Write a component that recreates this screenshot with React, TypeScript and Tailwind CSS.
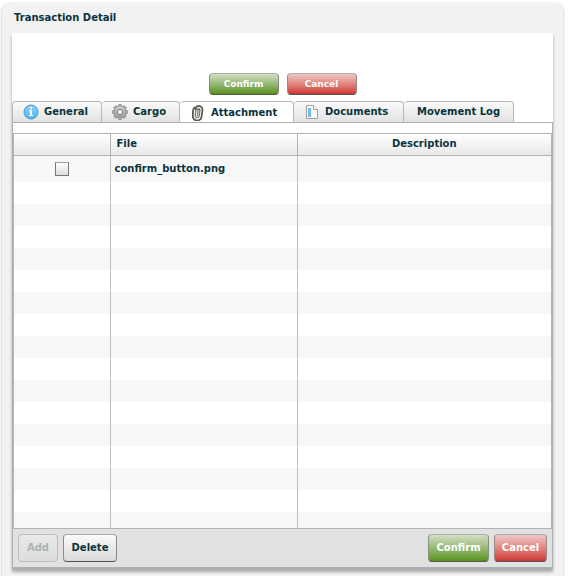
import React, { useState } from 'react';
import clsx from 'clsx';

interface Attachment {
  id: string;
  file: string;
  description: string;
}

interface Tab {
  id: string;
  label: string;
  width: string;
  icon?: React.ReactNode;
}

const attachments: Attachment[] = [
  { id: 'a1', file: 'confirm_button.png', description: '' },
];

// blank rows that fill up the grid below the data
const EMPTY_ROWS = 15;

const InfoIcon = () => (
  <svg className="h-4 w-4" viewBox="0 0 16 16" aria-hidden="true">
    <defs>
      <linearGradient id="info" x1="0" y1="0" x2="0" y2="1">
        <stop offset="0" stopColor="#8fd0f7" />
        <stop offset="1" stopColor="#4bb8f5" />
      </linearGradient>
    </defs>
    <circle cx="8" cy="8" r="7" fill="url(#info)" stroke="#4795c4" strokeWidth="1" />
    <rect x="7" y="3" width="2" height="2" fill="#fff" />
    <path d="M6 6h3v5h1v1H6v-1h1V7H6z" fill="#fff" />
  </svg>
);

const GearIcon = () => (
  <svg className="h-4 w-4" viewBox="0 0 16 16" aria-hidden="true">
    <defs>
      <linearGradient id="gear" x1="0" y1="0" x2="0" y2="1">
        <stop offset="0" stopColor="#d2d2d2" />
        <stop offset="1" stopColor="#999" />
      </linearGradient>
    </defs>
    {[0, 45, 90, 135].map((angle) => (
      <rect
        key={angle}
        x="6.3"
        y="0.5"
        width="3.4"
        height="15"
        rx="1.2"
        fill="#bbb"
        stroke="#7d7d7d"
        strokeWidth="0.9"
        transform={`rotate(${angle} 8 8)`}
      />
    ))}
    <circle cx="8" cy="8" r="5.8" fill="url(#gear)" stroke="#8a8a8a" strokeWidth="0.5" />
    <circle cx="8" cy="8" r="2.7" fill="#ededed" stroke="#757575" strokeWidth="0.9" />
  </svg>
);

const ClipIcon = () => (
  <svg className="h-4 w-4" viewBox="0 0 16 16" fill="none" strokeLinecap="round" aria-hidden="true">
    <path
      d="M5.8 4.4 5.3 10.5a2 2 0 0 0 4 .3l.6-6"
      stroke="#77776f"
      strokeWidth="1.3"
    />
    <path d="M7.6 10.5 8 5" stroke="#66665f" strokeWidth="1.1" />
    <path
      d="M5 2.4C3.6 3 3.1 4.2 3 6l-.2 5a4.4 4.4 0 0 0 8.8.4l.9-6.6A3.600 3.600 0 0 0 9 1C7 .8 5.9 2 5.8 4.400"
      stroke="#5c5c56"
      strokeWidth="1.8"
    />
    <path d="M9.9 4.8A1.2 1.2 0 0 0 7.6 4.600" stroke="#55554f" strokeWidth="1.2" />
  </svg>
);

const DocIcon = () => (
  <svg className="h-4 w-4" viewBox="0 0 16 16" aria-hidden="true">
    <path d="M2.5 1.5h7l4 4v9h-11z" fill="#fafafa" stroke="#a0a0a0" />
    <path d="M9.5 1.5v4h4" fill="#fff" stroke="#a0a0a0" />
    <rect x="4" y="4" width="3" height="9" fill="#74bdea" />
  </svg>
);

const tabs: Tab[] = [
  { id: 'general', label: 'General', width: 'w-[90px]', icon: <InfoIcon /> },
  { id: 'cargo', label: 'Cargo', width: 'w-[78px]', icon: <GearIcon /> },
  { id: 'attachment', label: 'Attachment', width: 'w-[114px]', icon: <ClipIcon /> },
  { id: 'documents', label: 'Documents', width: 'w-[110px]', icon: <DocIcon /> },
  { id: 'log', label: 'Movement Log', width: 'w-[110px]' },
];

interface ButtonProps extends React.ButtonHTMLAttributes<HTMLButtonElement> {
  tone?: 'plain' | 'green' | 'red';
}

function Button({ tone = 'plain', className, ...props }: ButtonProps) {
  return (
    <button
      type="button"
      className={clsx(
        'rounded border border-b-[#555] font-bold',
        tone === 'plain' &&
          'border-x-[#8a8a8a] border-t-[#a5a9ab] bg-linear-to-b from-[#fafafa] to-[#dadada] disabled:border-[#bdbdbd] disabled:text-[#aab3b3] disabled:from-[#e9e9e9] disabled:to-[#dcdcdc]',
        tone === 'green' &&
          'border-x-[#86907c] border-t-[#a9b0ae] bg-linear-to-b from-[#d3dfc4] to-[#5a9210] text-white',
        tone === 'red' &&
          'border-x-[#98888a] border-t-[#b0adae] bg-linear-to-b from-[#ecc8c8] to-[#cc3333] text-white',
        className
      )}
      {...props}
    />
  );
}

export default function App() {
  const [activeTab, setActiveTab] = useState('attachment');
  const [selected, setSelected] = useState<Set<string>>(new Set());

  const toggleSelected = (id: string) => {
    const next = new Set(selected);
    if (next.has(id)) {
      next.delete(id);
    } else {
      next.add(id);
    }
    setSelected(next);
  };

  return (
    <div className="flex min-h-screen bg-white pt-[3px] pr-[5px] pl-0.5 font-['DejaVu_Sans',Verdana,sans-serif] text-[10px] leading-4 font-bold text-[#0b333c]">
      <main className="flex-1 rounded-t-lg bg-[#f2f2f2] px-2.5 pt-[7px] shadow-[0_1px_3px_rgba(0,0,0,0.3)]">
        <h1 className="mb-[7px] px-0.5">Transaction Detail</h1>

        <section className="bg-white pt-10 shadow-[0_3px_3px_rgba(0,0,0,0.3)]">
          <div className="mb-1.5 flex justify-center gap-2">
            <Button tone="green" className="h-[22px] w-[70px] text-[9px]">Confirm</Button>
            <Button tone="red" className="h-[22px] w-[70px] text-[9px]">Cancel</Button>
          </div>

          <div role="tablist" className="flex h-[21px]">
            {tabs.map((tab) => {
              const active = tab.id === activeTab;
              return (
                <button
                  key={tab.id}
                  type="button"
                  role="tab"
                  aria-selected={active}
                  onClick={() => setActiveTab(tab.id)}
                  className={clsx(
                    'flex items-center gap-[5px] rounded-t border-t border-r border-[#b4b8ba] whitespace-nowrap first:border-l',
                    tab.width,
                    tab.icon ? 'pl-2.5' : 'justify-center',
                    active ? 'bg-white pt-0.5' : 'bg-linear-to-b from-[#fafafa] to-[#e2e2e2]'
                  )}
                >
                  {tab.icon}
                  {tab.label}
                </button>
              );
            })}
          </div>

          <div className="border border-b-2 border-[#a9b1b3]">
            <div className="h-2.5" />
            <div className="border border-[#b0b4b6]">
              <table className="w-full table-fixed border-collapse text-left">
                <colgroup>
                  <col className="w-24" />
                  <col className="w-[187px]" />
                  <col />
                </colgroup>
                <thead>
                  <tr className="h-[21px] bg-linear-to-b from-white to-[#e8e8e8]">
                    <th className="border-r border-b border-[#b0b4b6] p-0" aria-label="Select" />
                    <th className="border-r border-b border-[#b0b4b6] px-1.5 py-0">File</th>
                    <th className="border-b border-[#b0b4b6] p-0 text-center">Description</th>
                  </tr>
                </thead>
                <tbody>
                  {attachments.map((item) => (
                    <tr key={item.id} className="h-[27px] bg-[#f7f7f7]">
                      <td className="border-r border-[#c0c0c0] p-0">
                        <input
                          type="checkbox"
                          aria-label={`Select ${item.file}`}
                          checked={selected.has(item.id)}
                          onChange={() => toggleSelected(item.id)}
                          className="mx-auto block h-3.5 w-3.5 appearance-none border border-[#777] border-t-[#a0a0a0] bg-linear-to-b from-white to-[#dcdcdc] checked:from-[#0b333c] checked:to-[#0b333c]"
                        />
                      </td>
                      <td className="border-r border-[#c0c0c0] px-1 py-0">{item.file}</td>
                      <td className="px-1 py-0">{item.description}</td>
                    </tr>
                  ))}
                  {Array.from({ length: EMPTY_ROWS }, (_, i) => (
                    <tr key={i} className={clsx('h-[22px]', i % 2 === 0 ? 'bg-white' : 'bg-[#f7f7f7]')}>
                      <td className="border-r border-[#c0c0c0] p-0" />
                      <td className="border-r border-[#c0c0c0] p-0" />
                      <td className="p-0" />
                    </tr>
                  ))}
                  <tr className="h-4 bg-[#f7f7f7]">
                    <td className="border-r border-[#c0c0c0] p-0" />
                    <td className="border-r border-[#c0c0c0] p-0" />
                    <td className="p-0" />
                  </tr>
                </tbody>
              </table>
            </div>

            <div className="flex gap-[5px] bg-[#e1e1e1] p-[5px]">
              <Button disabled className="h-7 w-10">Add</Button>
              <Button className="h-7 w-[54px]">Delete</Button>
              <Button tone="green" className="ml-auto h-7 w-[61px]">Confirm</Button>
              <Button tone="red" className="h-7 w-[53px]">Cancel</Button>
            </div>
          </div>
        </section>
      </main>
    </div>
  );
}
